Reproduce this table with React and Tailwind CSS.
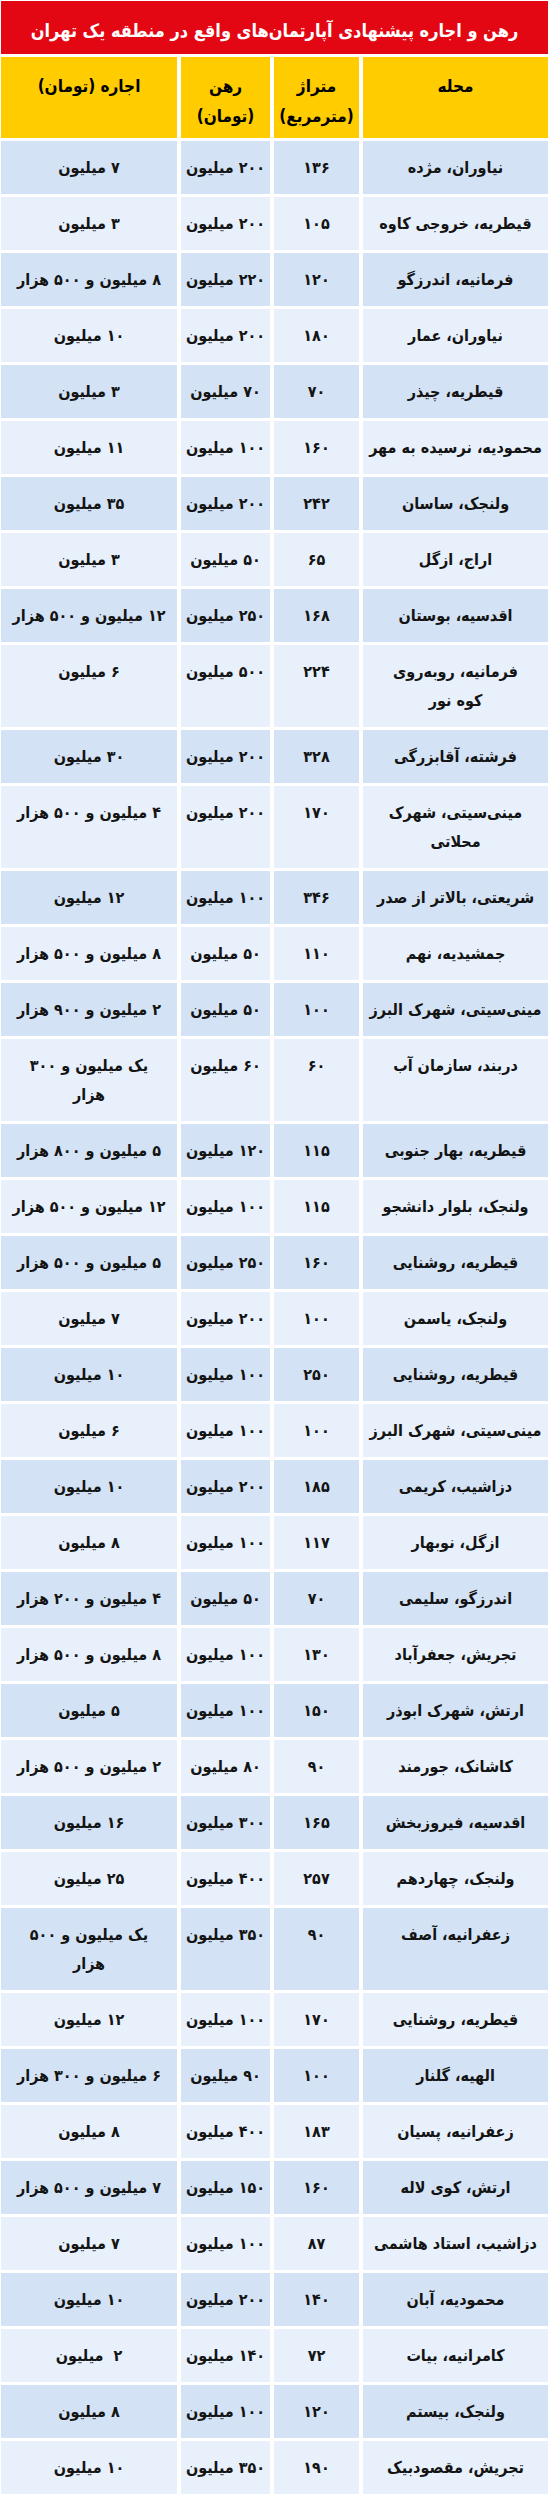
import React from "react";

const rows = [
  ["نیاوران، مژده", "۱۳۶", "۲۰۰ میلیون", "۷ میلیون"],
  ["قیطریه، خروجی کاوه", "۱۰۵", "۲۰۰ میلیون", "۳ میلیون"],
  ["فرمانیه، اندرزگو", "۱۲۰", "۲۲۰ میلیون", "۸ میلیون و ۵۰۰ هزار"],
  ["نیاوران، عمار", "۱۸۰", "۲۰۰ میلیون", "۱۰ میلیون"],
  ["قیطریه، چیذر", "۷۰", "۷۰ میلیون", "۳ میلیون"],
  ["محمودیه، نرسیده به مهر", "۱۶۰", "۱۰۰ میلیون", "۱۱ میلیون"],
  ["ولنجک، ساسان", "۲۴۲", "۲۰۰ میلیون", "۳۵ میلیون"],
  ["اراج، ازگل", "۶۵", "۵۰ میلیون", "۳ میلیون"],
  ["اقدسیه، بوستان", "۱۶۸", "۲۵۰ میلیون", "۱۲ میلیون و ۵۰۰ هزار"],
  [["فرمانیه، روبه‌روی", "کوه نور"], "۲۲۴", "۵۰۰ میلیون", "۶ میلیون"],
  ["فرشته، آقابزرگی", "۳۲۸", "۲۰۰ میلیون", "۳۰ میلیون"],
  [["مینی‌سیتی، شهرک", "محلاتی"], "۱۷۰", "۲۰۰ میلیون", "۴ میلیون و ۵۰۰ هزار"],
  ["شریعتی، بالاتر از صدر", "۳۴۶", "۱۰۰ میلیون", "۱۲ میلیون"],
  ["جمشیدیه، نهم", "۱۱۰", "۵۰ میلیون", "۸ میلیون و ۵۰۰ هزار"],
  ["مینی‌سیتی، شهرک البرز", "۱۰۰", "۵۰ میلیون", "۲ میلیون و ۹۰۰ هزار"],
  ["دربند، سازمان آب", "۶۰", "۶۰ میلیون", ["یک میلیون و ۳۰۰", "هزار"]],
  ["قیطریه، بهار جنوبی", "۱۱۵", "۱۲۰ میلیون", "۵ میلیون و ۸۰۰ هزار"],
  ["ولنجک، بلوار دانشجو", "۱۱۵", "۱۰۰ میلیون", "۱۲ میلیون و ۵۰۰ هزار"],
  ["قیطریه، روشنایی", "۱۶۰", "۲۵۰ میلیون", "۵ میلیون و ۵۰۰ هزار"],
  ["ولنجک، یاسمن", "۱۰۰", "۲۰۰ میلیون", "۷ میلیون"],
  ["قیطریه، روشنایی", "۲۵۰", "۱۰۰ میلیون", "۱۰ میلیون"],
  ["مینی‌سیتی، شهرک البرز", "۱۰۰", "۱۰۰ میلیون", "۶ میلیون"],
  ["دزاشیب، کریمی", "۱۸۵", "۲۰۰ میلیون", "۱۰ میلیون"],
  ["ازگل، نوبهار", "۱۱۷", "۱۰۰ میلیون", "۸ میلیون"],
  ["اندرزگو، سلیمی", "۷۰", "۵۰ میلیون", "۴ میلیون و ۲۰۰ هزار"],
  ["تجریش، جعفرآباد", "۱۳۰", "۱۰۰ میلیون", "۸ میلیون و ۵۰۰ هزار"],
  ["ارتش، شهرک ابوذر", "۱۵۰", "۱۰۰ میلیون", "۵ میلیون"],
  ["کاشانک، جورمند", "۹۰", "۸۰ میلیون", "۲ میلیون و ۵۰۰ هزار"],
  ["اقدسیه، فیروزبخش", "۱۶۵", "۳۰۰ میلیون", "۱۶ میلیون"],
  ["ولنجک، چهاردهم", "۲۵۷", "۴۰۰ میلیون", "۲۵ میلیون"],
  ["زعفرانیه، آصف", "۹۰", "۳۵۰ میلیون", ["یک میلیون و ۵۰۰", "هزار"]],
  ["قیطریه، روشنایی", "۱۷۰", "۱۰۰ میلیون", "۱۲ میلیون"],
  ["الهیه، گلنار", "۱۰۰", "۹۰ میلیون", "۶ میلیون و ۳۰۰ هزار"],
  ["زعفرانیه، پسیان", "۱۸۳", "۴۰۰ میلیون", "۸ میلیون"],
  ["ارتش، کوی لاله", "۱۶۰", "۱۵۰ میلیون", "۷ میلیون و ۵۰۰ هزار"],
  ["دزاشیب، استاد هاشمی", "۸۷", "۱۰۰ میلیون", "۷ میلیون"],
  ["محمودیه، آبان", "۱۴۰", "۲۰۰ میلیون", "۱۰ میلیون"],
  ["کامرانیه، بیات", "۷۲", "۱۴۰ میلیون", "۲  میلیون"],
  ["ولنجک، بیستم", "۱۲۰", "۱۰۰ میلیون", "۸ میلیون"],
  ["تجریش، مقصودبیک", "۱۹۰", "۳۵۰ میلیون", "۱۰ میلیون"],
];

function Lines({ v }) {
  const arr = Array.isArray(v) ? v : [v];
  return arr.map((t, i) => (
    <div key={i} className="whitespace-pre">
      {t}
    </div>
  ));
}

export default function App() {
  return (
    <div
      dir="rtl"
      className="w-[550px] bg-white pt-[1px] pb-[4px] pr-[2px] pl-[1px] flex flex-col gap-[3px] font-bold text-[#141414]"
      style={{ fontFamily: '"DejaVu Sans Condensed", "DejaVu Sans", sans-serif' }}
    >
      <div className="h-[53px] bg-[#e30613] flex items-center justify-center pt-[6px] text-white text-[18px] whitespace-nowrap">
        رهن و اجاره پیشنهادی آپارتمان‌های واقع در منطقه یک تهران
      </div>
      <div className="grid grid-cols-[185px_85px_89px_176px] gap-x-[4px] gap-y-[3px] text-[16px] leading-[29px]">
        {[
          ["محله"],
          ["متراژ", "(مترمربع)"],
          ["رهن", "(تومان)"],
          ["اجاره (تومان)"],
        ].map((h, i) => (
          <div
            key={i}
            className="bg-[#ffcc00] h-[81px] pt-[14px] text-center leading-[30px] text-[17px] text-black"
          >
            <Lines v={h} />
          </div>
        ))}
        {rows.map((r, ri) =>
          r.map((c, ci) => (
            <div
              key={ri + "-" + ci}
              className={
                "pt-[12px] pb-[12px] text-center " +
                (ri % 2 === 0 ? "bg-[#d3e3f5]" : "bg-[#e7f0fb]")
              }
            >
              <Lines v={c} />
            </div>
          ))
        )}
      </div>
    </div>
  );
}
